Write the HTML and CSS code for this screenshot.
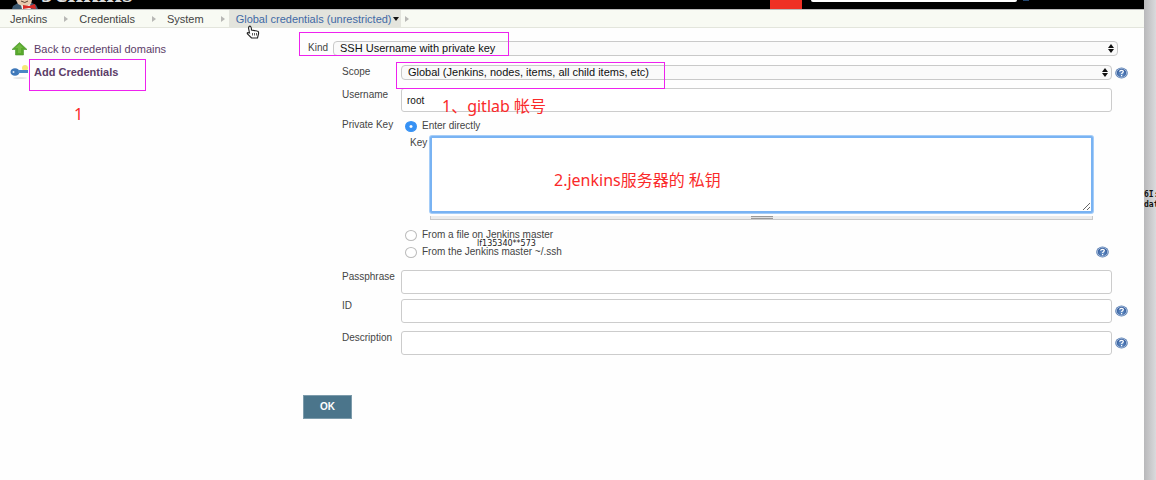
FILE: index.html
```html
<!DOCTYPE html>
<html lang="en">
<head>
<meta charset="utf-8">
<title>Add Credentials - Jenkins</title>
<link rel="stylesheet" href="styles.css">
</head>
<body>
<svg class="defs" aria-hidden="true">
  <defs>
    <radialGradient id="ball" cx=".5" cy=".6" r=".6"><stop offset="0" stop-color="#6f9bd0"/><stop offset="1" stop-color="#284f91"/></radialGradient>
    <symbol id="help" viewBox="0 0 14 12">
      <ellipse cx="7" cy="6" rx="6.8" ry="5.9" fill="#5d82b5"/>
      <ellipse cx="7" cy="6" rx="5.5" ry="4.7" fill="url(#ball)" stroke="#b9cce5" stroke-width=".8"/>
      <path d="M5 4.600C5.100 2.700 9 2.700 9 4.500C9 5.700 7.100 5.700 7.100 7.200M7.100 8.200V9.400" fill="none" stroke="#fff" stroke-width="1.300"/>
    </symbol>
  </defs>
</svg>
<div class="screen">
  <div class="page">
    <header class="topbar">
      <svg class="mascot" viewBox="0 0 26 9" aria-hidden="true">
        <path d="M0 9L1 6L6 3L20 3L24 5L26 9Z" fill="#3c5870"/>
        <path d="M4 0H20L19 4L15 6H10L6 4Z" fill="#e8c9ae"/>
        <path d="M9 5L13 7L18 4L19 9H10Z" fill="#f4f2ee"/>
        <path d="M11 5L17 6L23 4L24 9L17 8L11 9Z" fill="#d92b27"/>
        <path d="M9 1Q13 4 16 1" fill="none" stroke="#5b4032"/>
      </svg>
      <span class="brand">Jenkins</span>
      <span class="alert"></span>
      <span class="search"></span>
      <span class="search-help"></span>
    </header>
    <nav class="crumbs">
      <a href="#">Jenkins</a><i class="sep"></i>
      <a href="#">Credentials</a><i class="sep"></i>
      <a href="#">System</a><i class="sep"></i>
      <a href="#" class="current">Global credentials (unrestricted)<i class="caret"></i></a><i class="sep"></i>
    </nav>
    <div class="body">
      <aside class="side">
        <a href="#" class="task">
          <svg viewBox="0 0 18 14" aria-hidden="true"><path d="M9.500 .5L17 7.500H13.500V13H5.500V7.500H2Z" fill="#58a92c" stroke="#4b9330" stroke-width=".6"/><path d="M9.500 2L13 6H11V11H8V6H5Z" fill="#8ac957" opacity=".5"/></svg>
          Back to credential domains</a>
        <a href="#" class="task active">
          <svg viewBox="0 0 18 14" aria-hidden="true"><ellipse cx="10" cy="13" rx="7" ry=".8" fill="#ddd"/><circle cx="15" cy="3" r="3" fill="#f5e878"/><ellipse cx="5" cy="7" rx="4.500" ry="3.800" fill="#3f78b9"/><path d="M8 5H18V8H8Z" fill="#4b86c5"/><circle cx="3.500" cy="7" r="1" fill="#dceaf7"/></svg>
          Add Credentials</a>
      </aside>
      <form class="form">
        <div class="kind">
          <label for="kind">Kind</label>
          <div class="select"><select id="kind"><option>SSH Username with private key</option></select></div>
        </div>
        <div class="row scope">
          <label for="scope">Scope</label>
          <div class="select"><select id="scope"><option>Global (Jenkins, nodes, items, all child items, etc)</option></select></div>
          <svg class="help"><use href="#help"/></svg>
        </div>
        <div class="row">
          <label for="user">Username</label>
          <input class="text" id="user" type="text" value="root">
        </div>
        <div class="row keys">
          <span class="label">Private Key</span>
          <div class="options">
            <label class="option"><input type="radio" name="source" checked>Enter directly</label>
            <div class="key">
              <label for="key">Key</label>
              <div class="area"><textarea id="key"></textarea><div class="grip"></div></div>
            </div>
            <label class="option"><input type="radio" name="source">From a file on Jenkins master</label>
            <div class="last">
              <label class="option"><input type="radio" name="source">From the Jenkins master ~/.ssh</label>
              <svg class="help"><use href="#help"/></svg>
            </div>
          </div>
        </div>
        <div class="row">
          <label for="pass">Passphrase</label>
          <input class="text" id="pass" type="password">
        </div>
        <div class="row">
          <label for="cid">ID</label>
          <input class="text" id="cid" type="text">
          <svg class="help"><use href="#help"/></svg>
        </div>
        <div class="row desc">
          <label for="desc">Description</label>
          <input class="text" id="desc" type="text">
          <svg class="help"><use href="#help"/></svg>
        </div>
        <button class="ok" type="button">OK</button>
      </form>
    </div>
  </div>
  <div class="behind"><span>6I:</span><span>dat</span></div>
  <div class="box box-kind"></div>
  <div class="box box-scope"></div>
  <div class="box box-add"></div>
  <span class="note note-one">1</span>
  <span class="note note-user">1、gitlab 帐号</span>
  <span class="note note-key">2.jenkins服务器的 私钥</span>
  <span class="stamp">lf135340**573</span>
  <svg class="cursor" viewBox="0 0 14 14" aria-hidden="true"><path d="M3 1.500C4.500 .5 5.500 2 5.500 5L11 6Q13 6 12.500 9L11.500 13H5.500L1.500 9Q.5 7 3.500 8L2.500 3Z" fill="#fff" stroke="#222" stroke-width="1.100"/><path d="M6.500 8V10.500M8.500 8V10.500M10.500 8V10.500" stroke="#333" stroke-width=".8"/></svg>
</div>
</body>
</html>
```

FILE: styles.css
```css
* { box-sizing: border-box; }
body {
  margin: 0;
  background: #fefefe;
  color: #444;
  font: 10px/12px "Liberation Sans", Arial, sans-serif;
}
.defs { position: absolute; width: 0; height: 0; }
.screen { position: relative; display: flex; min-height: 100vh; overflow: hidden; }
.page { flex: 1; min-width: 0; }
a { color: inherit; text-decoration: none; }

.topbar { display: flex; height: 9px; overflow: hidden; padding-left: 12px; background: #000; }
.mascot { width: 26px; height: 9px; margin-right: 3px; }
.brand { flex: 1; margin-top: -21px; color: #ddd; font: bold 28px/28px "Liberation Serif", serif; }
.alert { width: 32px; background: #ef3024; }
.search { width: 206px; height: 2px; margin-left: 9px; background: #fff; border-radius: 0 0 3px 3px; }
.search-help { width: 6px; height: 1px; margin: 0 115px 0 6px; background: #23466f; }

.crumbs {
  display: flex;
  align-items: center;
  height: 19px;
  padding-left: 10px;
  background: #f8faf3;
  border-top: 1px solid #bbb;
  border-bottom: 1px solid #e3e5dc;
  font-size: 11px;
}
.sep { margin: 0 11px 0 17px; border: 3px solid transparent; border-left: 4px solid #b8b8b5; border-right: 0; }
.current { display: flex; align-items: center; align-self: stretch; padding: 0 2px 0 7px; margin-left: -7px; background: #e3e4dd; color: #4169a5; }
.caret { margin-left: 1px; border: 3px solid transparent; border-top: 4px solid #111; border-bottom: 0; }
.current + .sep { margin-left: 4px; }

.body { display: flex; }
.side { display: flex; flex-direction: column; gap: 9px; width: 303px; padding: 14px 0 0 10px; color: #5c3c68; font-size: 11px; }
.task { display: flex; align-items: center; gap: 6px; height: 14px; }
.task svg { width: 18px; height: 14px; }
.active { font-weight: bold; }

.form { flex: 1; min-width: 0; padding: 13px 16px 20px 0; }
.kind { display: flex; gap: 5px; padding: 0 10px 0 5px; }
.kind label, .row > label, .row > .label, .key > label { padding-top: 1px; }
.row { display: grid; grid-template-columns: 56px 1fr 13px; column-gap: 3px; margin: 5px 0 0 39px; }
.scope { margin-top: 9px; margin-bottom: 8px; }
.select { position: relative; flex: 1; }
select {
  display: block;
  width: 100%;
  height: 15px;
  padding: 0 6px;
  appearance: none;
  background: #fafafa;
  border: 1px solid #c9c9c9;
  border-radius: 4px;
  color: #111;
  font: 11px/13px "Liberation Sans", Arial, sans-serif;
}
.select::before, .select::after { content: ""; position: absolute; right: 4px; border: 3px solid transparent; }
.select::before { top: 3px; border-bottom: 4px solid #111; border-top: 0; }
.select::after { bottom: 3px; border-top: 4px solid #111; border-bottom: 0; }
.help { width: 13px; height: 12px; align-self: center; }
.text {
  width: 100%;
  height: 24px;
  padding: 0 5px;
  background: #fff;
  border: 1px solid #ccc;
  border-radius: 3px;
  color: #111;
  font: inherit;
}
.desc { margin-top: 8px; }

.keys { margin: 6px 0 12px 39px; }
.options { grid-column: 2 / 4; padding: 2px 19px 0 4px; }
.option { display: flex; align-items: center; gap: 5px; height: 12px; }
.option input { appearance: none; width: 12px; height: 11px; margin: 0; background: #fff; border: 1px solid #bbb; border-radius: 50%; }
.option input:checked { background: radial-gradient(#fff 0 1px, #3691f4 2px); border-color: #3691f4; }
.key { display: flex; gap: 3px; padding: 4px 16px 0 5px; margin-bottom: 9px; }
.area { flex: 1; }
textarea { display: block; width: 100%; height: 77px; background: #fff; border: 2px solid #79b3f3; border-radius: 2px; outline: none; box-shadow: 0 0 0 1px #a5cdf8; }
.grip { height: 4px; margin-top: 3px; background: linear-gradient(#999 1px, #ddd 1px 2px, #999 2px) center / 22px 3px no-repeat, #ececec; border: solid #c8c8c8; border-width: 0 1px 1px; }
.last { display: flex; justify-content: space-between; margin-top: 5px; }
.ok { display: block; width: 49px; height: 24px; margin-top: 40px; padding: 0; background: #4b758b; border: 1px solid #7c9bab; color: #fff; font: bold 10px/12px "Liberation Sans", Arial, sans-serif; }

.behind {
  display: flex;
  flex-direction: column;
  width: 12px;
  padding-top: 190px;
  overflow: hidden;
  background: linear-gradient(90deg, #b8b8ba, #dadadc);
  color: #111;
  font: bold 8px/10px "DejaVu Sans Mono", monospace;
}
.box { position: absolute; border: 1px solid #ee22ee; }
.box-kind { left: 299px; top: 32px; width: 210px; height: 24px; }
.box-scope { left: 396px; top: 62px; width: 269px; height: 27px; }
.box-add { left: 29px; top: 59px; width: 117px; height: 32px; }
.note { position: absolute; color: #fa2a2a; font: 16px/18px "Noto Sans", "Noto Sans CJK SC", sans-serif; white-space: nowrap; }
.note-one { left: 74px; top: 105px; }
.note-user { left: 442px; top: 97px; }
.note-key { left: 554px; top: 171px; }
.stamp { position: absolute; left: 477px; top: 239px; color: #222; font: 8px/10px "DejaVu Sans", sans-serif; }
.cursor { position: absolute; left: 246px; top: 25px; width: 14px; height: 14px; }
```
